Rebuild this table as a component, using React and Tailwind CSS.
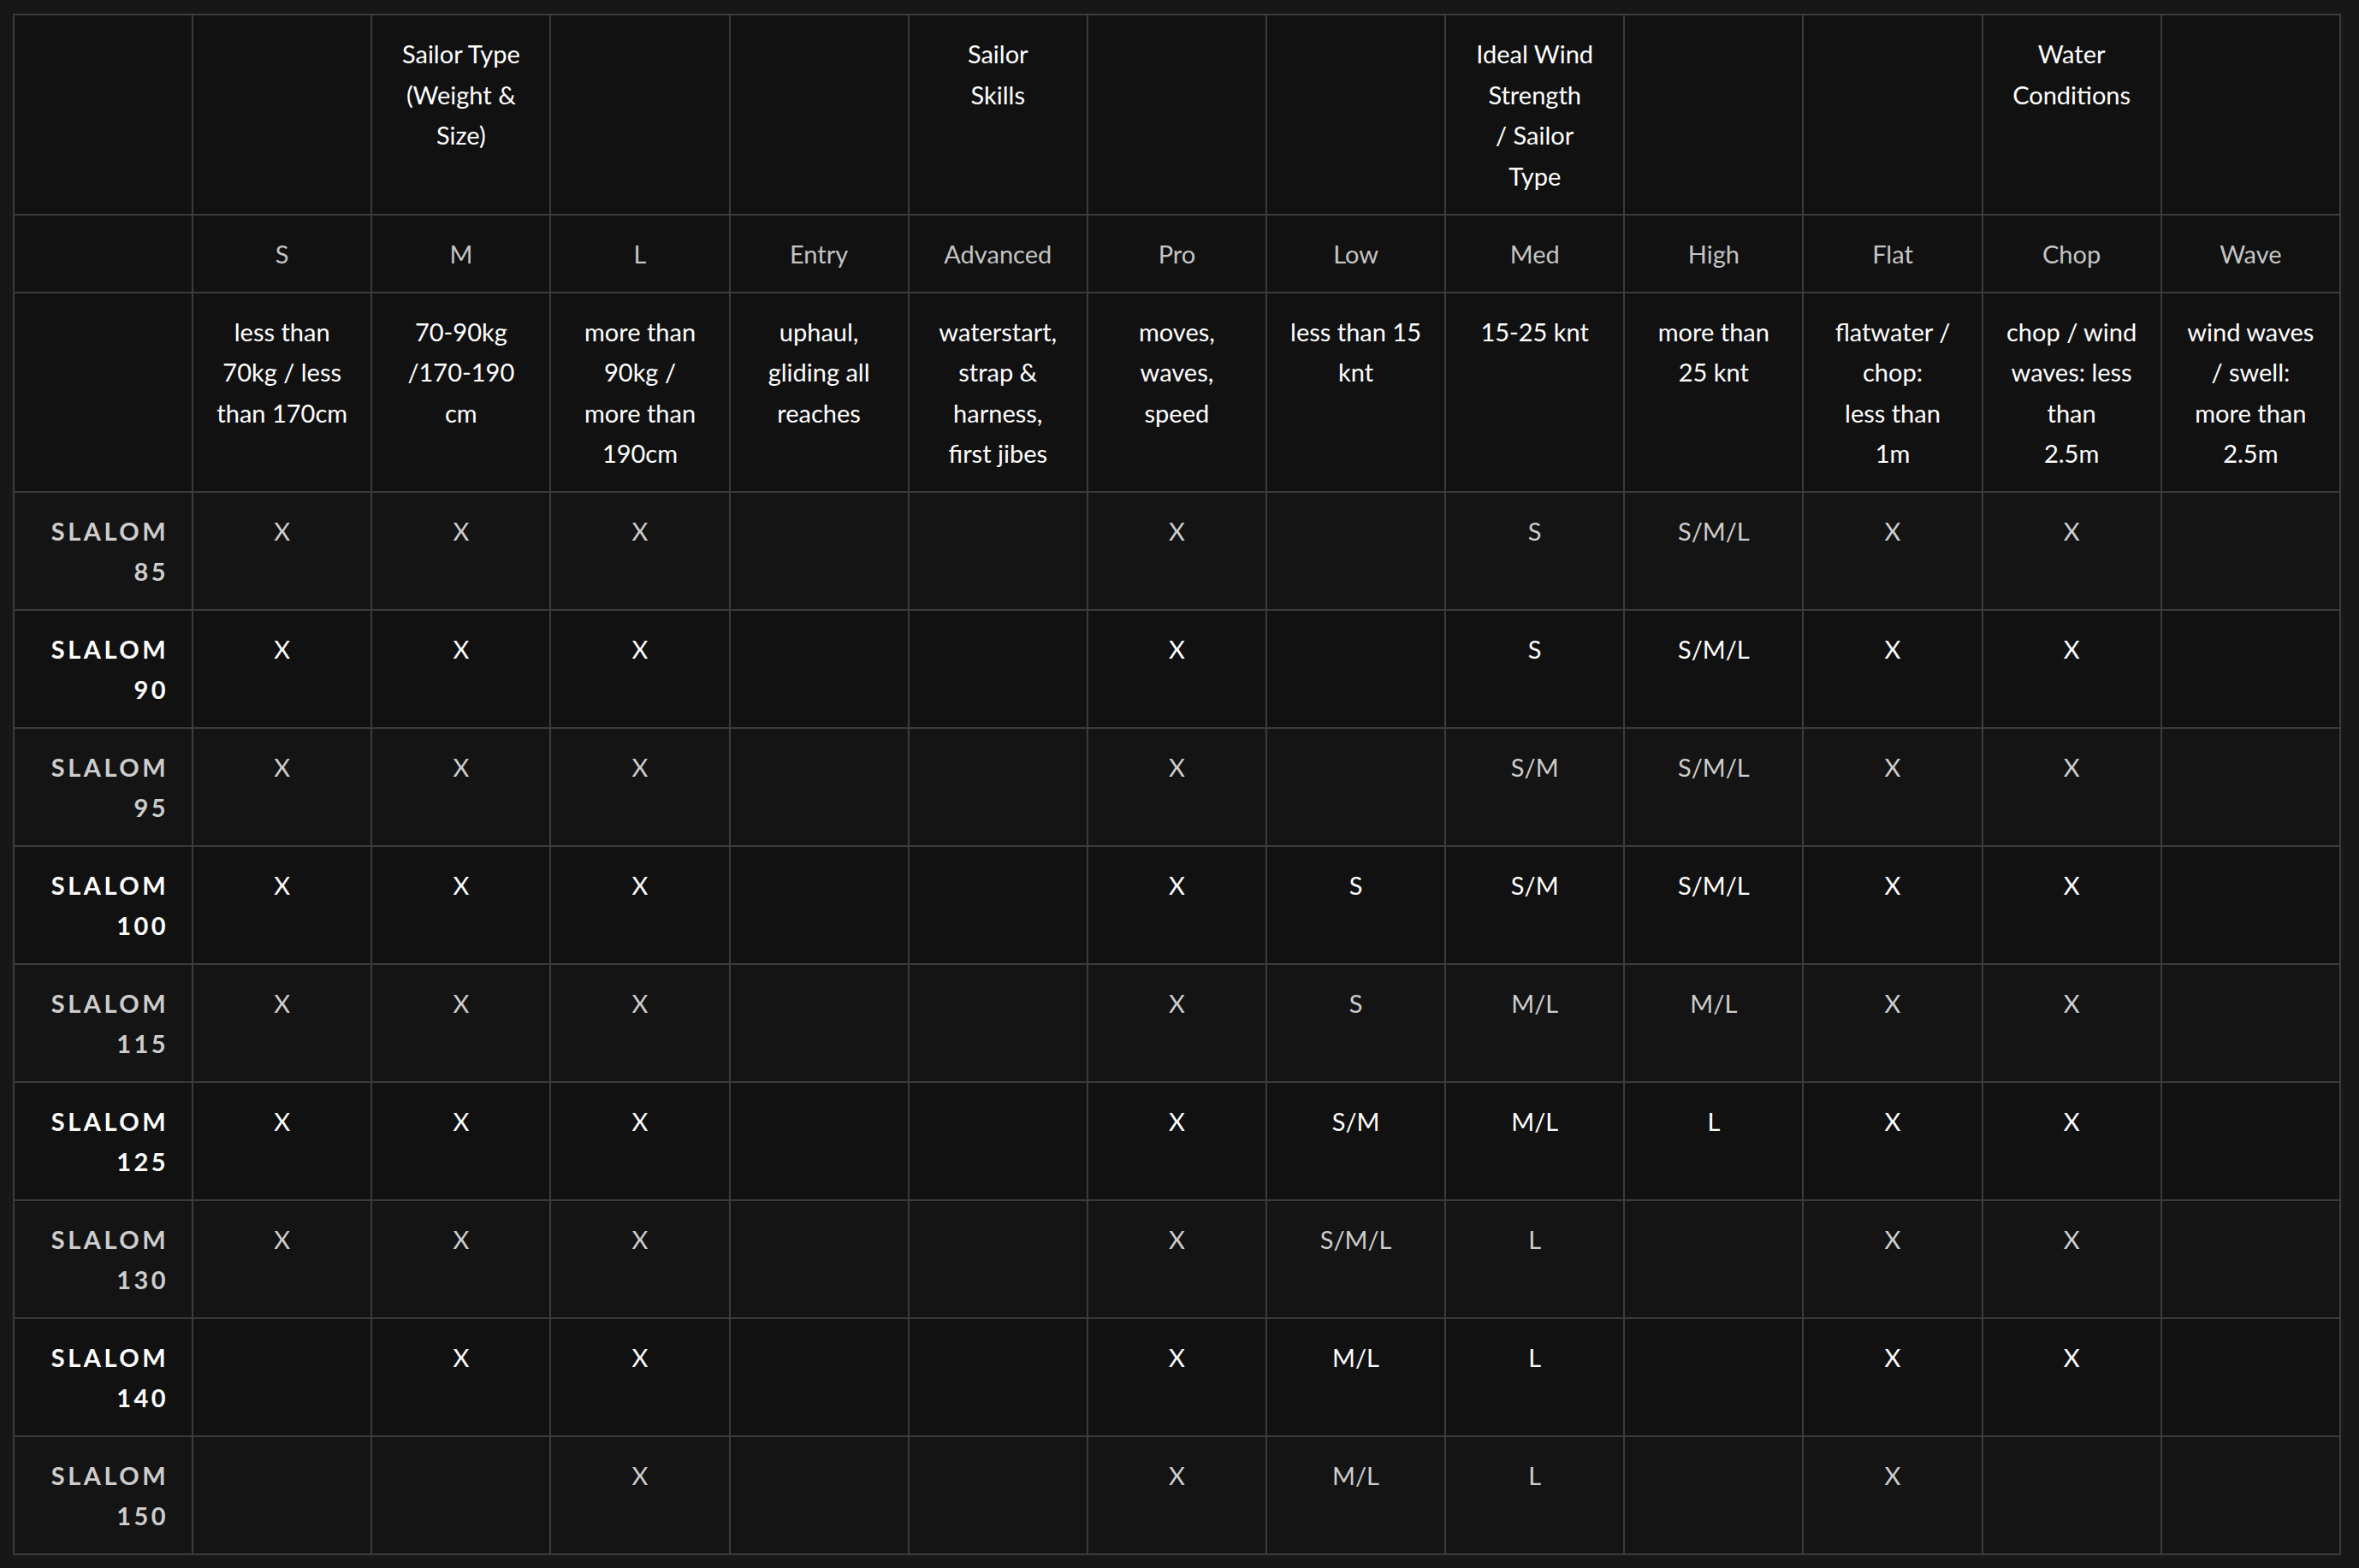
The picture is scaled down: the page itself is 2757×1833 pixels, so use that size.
const topHead = ["", "", "Sailor Type\n(Weight &\nSize)", "", "", "Sailor\nSkills", "", "", "Ideal Wind\nStrength\n/ Sailor\nType", "", "", "Water\nConditions", ""];

const subHead = ["", "S", "M", "L", "Entry", "Advanced", "Pro", "Low", "Med", "High", "Flat", "Chop", "Wave"];

const notes = [
  "",
  "less than\n70kg / less\nthan 170cm",
  "70-90kg\n/170-190\ncm",
  "more than\n90kg /\nmore than\n190cm",
  "uphaul,\ngliding all\nreaches",
  "waterstart,\nstrap &\nharness,\nfirst jibes",
  "moves,\nwaves,\nspeed",
  "less than 15\nknt",
  "15-25 knt",
  "more than\n25 knt",
  "flatwater /\nchop:\nless than\n1m",
  "chop / wind\nwaves: less\nthan\n2.5m",
  "wind waves\n/ swell:\nmore than\n2.5m",
];

const rows = [
  ["85", "X", "X", "X", "", "", "X", "", "S", "S/M/L", "X", "X", ""],
  ["90", "X", "X", "X", "", "", "X", "", "S", "S/M/L", "X", "X", ""],
  ["95", "X", "X", "X", "", "", "X", "", "S/M", "S/M/L", "X", "X", ""],
  ["100", "X", "X", "X", "", "", "X", "S", "S/M", "S/M/L", "X", "X", ""],
  ["115", "X", "X", "X", "", "", "X", "S", "M/L", "M/L", "X", "X", ""],
  ["125", "X", "X", "X", "", "", "X", "S/M", "M/L", "L", "X", "X", ""],
  ["130", "X", "X", "X", "", "", "X", "S/M/L", "L", "", "X", "X", ""],
  ["140", "", "X", "X", "", "", "X", "M/L", "L", "", "X", "X", ""],
  ["150", "", "", "X", "", "", "X", "M/L", "L", "", "X", "", ""],
];

const cell = "border-2 border-[#3b3b3b] px-[27px] pt-[21px] pb-[20px] align-top text-center whitespace-pre-line";

export default function App() {
  return (
    <div className="min-h-screen bg-[#171717] pt-[16px] pl-[15px] font-['Lato','Noto_Sans',sans-serif] text-[29px] leading-[47.5px]">
      <table className="w-[2721px] table-fixed border-collapse">
        <tbody>
          <tr className="bg-[#111111] text-white">
            {topHead.map((t, i) => (
              <td key={i} className={cell + " !pb-[21px]"}>{t}</td>
            ))}
          </tr>
          <tr className="bg-[#111111] text-[#c4c4c4]">
            {subHead.map((t, i) => (
              <td key={i} className={cell}>{t}</td>
            ))}
          </tr>
          <tr className="bg-[#111111] text-white">
            {notes.map((t, i) => (
              <td key={i} className={cell}>{t}</td>
            ))}
          </tr>
          {rows.map((r, ri) => (
            <tr
              key={r[0]}
              className={ri % 2 === 0 ? "bg-[#141414] text-[#cdcdcd]" : "bg-[#111111] text-white"}
            >
              <td className={cell + " !text-right"}>
                <span className="font-bold tracking-[3.5px]">SLALOM</span>
                <br />
                <span className="font-bold tracking-[3.5px]">{r[0]}</span>
              </td>
              {r.slice(1).map((t, i) => (
                <td key={i} className={cell}>{t}</td>
              ))}
            </tr>
          ))}
        </tbody>
      </table>
    </div>
  );
}
